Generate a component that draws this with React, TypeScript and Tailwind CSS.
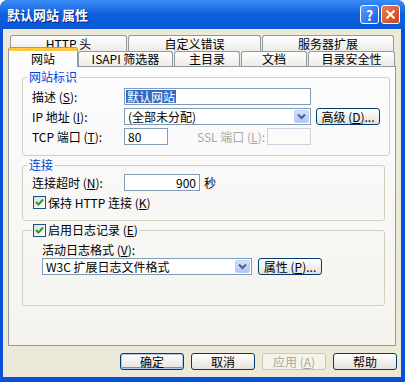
import React from "react";

const M = ({ c }: { c: string }) => (
  <>
    (<u className="underline-offset-[1px]">{c}</u>)
  </>
);

const Check = () => (
  <span className="flex h-[13px] w-[13px] shrink-0 items-center justify-center border border-[#1C5180] bg-gradient-to-br from-[#DCDCD7] to-white">
    <svg width="9" height="9" viewBox="0 0 9 9">
      <path d="M1 4 L3.5 6.5 L8 1.5" stroke="#21A121" strokeWidth="2" fill="none" />
    </svg>
  </span>
);

const DropArrow = () => (
  <span className="flex h-full w-[15px] items-center justify-center rounded-[2px] border border-[#B9D1FB] bg-gradient-to-b from-[#D3E1FC] to-[#B1C8F6]">
    <svg width="9" height="7" viewBox="0 0 9 7">
      <path d="M1 1.5 L4.5 5 L8 1.5" stroke="#4D6185" strokeWidth="2" fill="none" />
    </svg>
  </span>
);

const Btn = ({
  children,
  w = "w-[64px]",
  def = false,
  disabled = false,
}: {
  children: React.ReactNode;
  w?: string;
  def?: boolean;
  disabled?: boolean;
}) => (
  <div
    className={
      disabled
        ? `${w} flex h-[17px] items-center justify-center rounded-[3px] border border-[#C9C7BA] bg-[#F5F4EA] text-[#ACA899]`
        : def
        ? `${w} flex h-[17px] items-center justify-center rounded-[3px] border border-[#003C74] bg-gradient-to-b from-white to-[#E3E2DA] shadow-[inset_0_0_0_1px_#B2CDF4,inset_0_-1px_0_1px_#6A8CE8] text-black`
        : `${w} flex h-[17px] items-center justify-center rounded-[3px] border border-[#003C74] bg-gradient-to-b from-white to-[#E3E2DA] text-black`
    }
  >
    {children}
  </div>
);

const TabBack = ({ w, children }: { w: string; children: React.ReactNode }) => (
  <div
    className={`${w} flex h-full items-center justify-center rounded-t-[3px] border border-b-0 border-[#919B9C] bg-gradient-to-b from-white to-[#ECEBE6]`}
  >
    {children}
  </div>
);

export default function App() {
  return (
    <div className="flex h-[382px] w-[405px] flex-col overflow-hidden rounded-t-[8px] bg-[#0A50D8] font-['Noto_Sans_CJK_SC',sans-serif] text-[12px] leading-[14px] text-black">
      {/* title bar */}
      <div className="flex h-[29px] shrink-0 items-center bg-gradient-to-b from-[#3A8CF7] via-[#0A60DD] to-[#0A58D6] pl-[7px] pr-[5px]">
        <span className="text-[13px] font-bold text-white [text-shadow:1px_1px_#0A1883]">
          默认网站 属性
        </span>
        <div className="ml-auto flex gap-[2px]">
          <div className="flex h-[19px] w-[19px] items-center justify-center rounded-[3px] border border-white bg-gradient-to-br from-[#5A9BFF] to-[#1C5EE0] text-[14px] font-bold leading-none text-white">
            ?
          </div>
          <div className="flex h-[19px] w-[19px] items-center justify-center rounded-[3px] border border-white bg-gradient-to-br from-[#EA7C55] to-[#C8401A]">
            <svg width="11" height="11" viewBox="0 0 11 11">
              <path d="M1.5 1.5 L9.5 9.5 M9.5 1.5 L1.5 9.5" stroke="white" strokeWidth="2" />
            </svg>
          </div>
        </div>
      </div>

      {/* body */}
      <div className="ml-[3px] mr-[4px] mb-[5px] flex flex-1 flex-col bg-[#ECE9D8]">
        {/* tabs */}
        <div className="pt-[6px]">
          <div className="flex h-[16px] gap-[1px] pl-[7px]">
            <TabBack w="w-[117px]">HTTP 头</TabBack>
            <TabBack w="w-[133px]">自定义错误</TabBack>
            <TabBack w="w-[132px]">服务器扩展</TabBack>
          </div>
          <div className="flex h-[15px] items-end pl-[5px]">
            <div className="relative z-10 mb-[-1px] flex h-[19px] w-[70px] items-start justify-center rounded-t-[3px] border-x border-[#919B9C] border-t-[3px] border-t-[#FFC83C] bg-[#FCFCFE] pt-[1px] shadow-[0_-1px_0_#E68B2C]">
              网站
            </div>
            <div className="flex h-[15px] gap-[1px]">
              <TabBack w="w-[95px]">ISAPI 筛选器</TabBack>
              <TabBack w="w-[66px]">主目录</TabBack>
              <TabBack w="w-[66px]">文档</TabBack>
              <TabBack w="w-[87px]">目录安全性</TabBack>
            </div>
          </div>
        </div>

        {/* panel */}
        <div className="mx-[5px] h-[280px] border border-[#919B9C] bg-gradient-to-b from-[#FCFCFE] to-[#F4F3EE] pl-[13px] pr-[10px] pt-[3px]">
          {/* 网站标识 */}
          <fieldset className="rounded-[3px] border border-[#D0D0BF] px-[9px] pb-[10px] pt-[4px]">
            <legend className="-ml-[5px] px-[2px] text-[#0046D5]">网站标识</legend>
            <div className="flex flex-col gap-[3px]">
              <div className="flex h-[17px] items-center">
                <span className="w-[92px]">
                  描述 <M c="S" />:
                </span>
                <div className="flex h-[17px] w-[187px] items-center border border-[#7F9DB9] bg-white px-[1px]">
                  <span className="flex h-[13px] items-center bg-[#316AC5] px-[1px] text-white">默认网站</span>
                </div>
              </div>
              <div className="flex h-[17px] items-center">
                <span className="w-[92px]">
                  IP 地址 <M c="I" />:
                </span>
                <div className="flex h-[17px] w-[187px] items-center border border-[#7F9DB9] bg-white p-[1px] pl-[3px]">
                  <span className="flex-1">(全部未分配)</span>
                  <DropArrow />
                </div>
                <div className="ml-[5px]">
                  <Btn w="w-[64px]">
                    <span>
                      高级 <M c="D" />...
                    </span>
                  </Btn>
                </div>
              </div>
              <div className="flex h-[17px] items-center">
                <span className="w-[92px]">
                  TCP 端口 <M c="T" />:
                </span>
                <div className="flex h-[17px] w-[44px] items-center border border-[#7F9DB9] bg-white pl-[3px]">
                  80
                </div>
                <span className="ml-[29px] w-[70px] text-[#ACA899]">
                  SSL 端口 <M c="L" />:
                </span>
                <div className="h-[17px] w-[44px] border border-[#C9D3DE] bg-[#FBFBF9]" />
              </div>
            </div>
          </fieldset>

          {/* 连接 */}
          <fieldset className="mt-[2px] rounded-[3px] border border-[#D0D0BF] px-[9px] pb-[11px] pt-[2px]">
            <legend className="-ml-[5px] px-[2px] text-[#0046D5]">连接</legend>
            <div className="flex h-[17px] items-center">
              <span className="w-[92px]">
                连接超时 <M c="N" />:
              </span>
              <div className="flex h-[17px] w-[76px] items-center justify-end border border-[#7F9DB9] bg-white pr-[3px]">
                900
              </div>
              <span className="ml-[4px]">秒</span>
            </div>
            <div className="ml-[1px] mt-[5px] flex h-[13px] items-center gap-[2px]">
              <Check />
              <span>
                保持 HTTP 连接 <M c="K" />
              </span>
            </div>
          </fieldset>

          {/* 日志 */}
          <fieldset className="mt-[2px] rounded-[3px] border border-[#D0D0BF] px-[9px] pb-[30px] pt-[6px]">
            <legend className="px-[1px]">
              <span className="flex items-center gap-[2px]">
                <Check />
                <span>
                  启用日志记录 <M c="E" />
                </span>
              </span>
            </legend>
            <div className="pl-[10px]">
              <div className="h-[14px]">
                活动日志格式 <M c="V" />:
              </div>
              <div className="mt-[1px] flex items-center">
                <div className="flex h-[17px] w-[210px] items-center border border-[#7F9DB9] bg-white p-[1px] pl-[3px]">
                  <span className="flex-1">W3C 扩展日志文件格式</span>
                  <DropArrow />
                </div>
                <div className="ml-[6px]">
                  <Btn w="w-[64px]">
                    <span>
                      属性 <M c="P" />...
                    </span>
                  </Btn>
                </div>
              </div>
            </div>
          </fieldset>
        </div>

        {/* bottom buttons */}
        <div className="mt-[7px] flex justify-end gap-[7px] pr-[4px]">
          <Btn def>确定</Btn>
          <Btn>取消</Btn>
          <Btn disabled>
            <span>
              应用 <M c="A" />
            </span>
          </Btn>
          <Btn>帮助</Btn>
        </div>
      </div>
    </div>
  );
}
